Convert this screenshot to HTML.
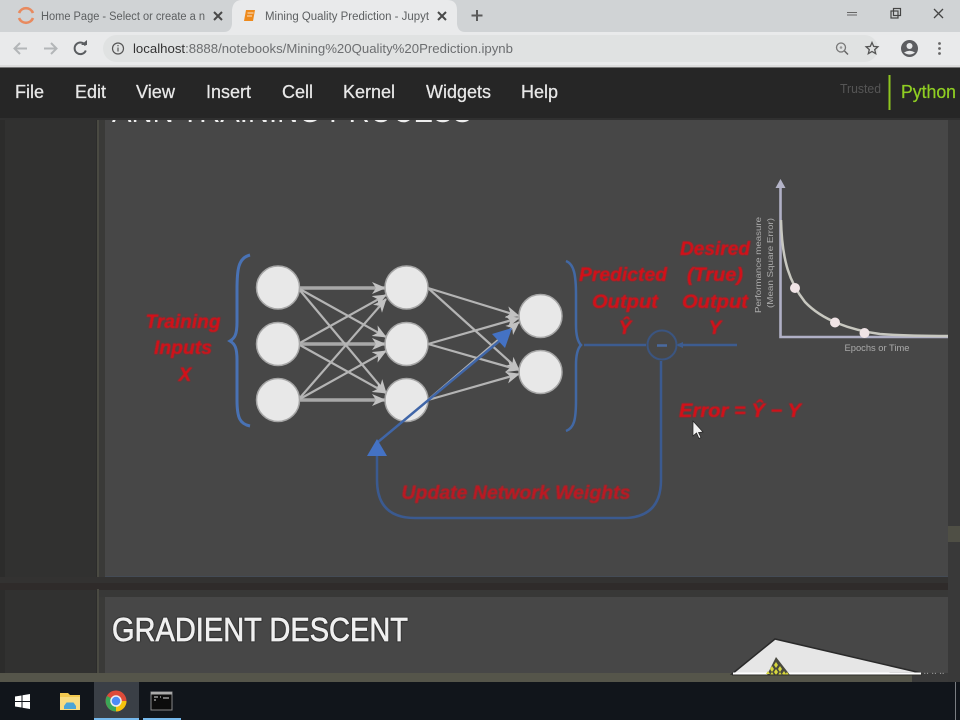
<!DOCTYPE html>
<html><head><meta charset="utf-8"><style>
html,body{margin:0;padding:0;background:#2e2e2d}
body{width:960px;height:720px;overflow:hidden;position:relative;font-family:"Liberation Sans",sans-serif}
svg{position:absolute;left:0;top:0}
</style></head><body>
<svg width="960" height="720" viewBox="0 0 960 720" xmlns="http://www.w3.org/2000/svg" font-family="Liberation Sans, sans-serif">
<defs>
<filter id="b"><feGaussianBlur stdDeviation="0.35"/></filter>
<filter id="c"><feGaussianBlur stdDeviation="0.55"/></filter>
<marker id="ah" viewBox="0 0 14 12" refX="13" refY="6" markerUnits="userSpaceOnUse" markerWidth="14" markerHeight="12" orient="auto"><path d="M0 0L14 6L0 12L4 6Z" fill="#c2c2c2"/></marker>
</defs>
<!-- page -->
<rect width="960" height="720" fill="#2e2e2d"/>
<!-- notebook -->
<rect x="0" y="118" width="948" height="460" fill="#2c2c2b"/>
<rect x="5" y="120" width="91" height="457" fill="#313130"/>
<rect x="97" y="120" width="2" height="457" fill="#4a4a42"/>
<rect x="99" y="120" width="6" height="457" fill="#3a3a38"/>
<rect x="105" y="120" width="843" height="457" fill="#474747"/>
<rect x="105" y="576" width="843" height="1" fill="#444b55"/>
<rect x="0" y="577" width="948" height="6" fill="#333231"/>
<rect x="0" y="583" width="948" height="7" fill="#2f2b2a"/>
<rect x="0" y="590" width="948" height="85" fill="#2c2c2b"/>
<rect x="5" y="590" width="91" height="85" fill="#313130"/>
<rect x="97" y="589" width="2" height="86" fill="#4a4a42"/>
<rect x="99" y="590" width="849" height="7" fill="#383837"/>
<rect x="99" y="597" width="6" height="78" fill="#3a3a38"/>
<rect x="105" y="597" width="843" height="78" fill="#474747"/>
<rect x="948" y="118" width="12" height="564" fill="#393939"/>
<rect x="948" y="526" width="12" height="16" fill="#4f4f45"/>
<rect x="0" y="673" width="912" height="9" fill="#55554a"/>
<rect x="912" y="673" width="36" height="9" fill="#3a3a3a"/>
<!-- clipped title (covered by the menubar above y=120) -->
<text x="112" y="122" font-size="33" fill="#eee" textLength="360" lengthAdjust="spacingAndGlyphs">ANN TRAINING PROCESS</text>
<!-- chrome tabs -->
<rect width="960" height="32" fill="#d0d3d5"/>
<path d="M224 32q7 0 8-8v-14q1-10 10-10h205q10 0 10 10v14q1 8 8 8z" fill="#e9eaeb"/>
<rect y="32" width="960" height="33" fill="#e9eaeb"/>
<rect y="65" width="960" height="2" fill="#dcdcdc"/>
<rect y="67" width="960" height="1" fill="#777"/>
<rect x="103" y="35" width="775" height="27" rx="13.500" fill="#e0e2e2"/>
<g filter="url(#b)">
<path d="M19 13a7.500 7.500 0 0 1 14 0M19 18a7.500 7.500 0 0 0 14 0" fill="none" stroke="#e88a5e" stroke-width="2.600"/>
<text x="41" y="20" font-size="11.500" fill="#5c5f61" textLength="164" lengthAdjust="spacingAndGlyphs">Home Page - Select or create a n</text>
<path d="M214 12l8 8M222 12l-8 8" stroke="#4a4a4a" stroke-width="2"/>
<path d="M246 10h9l-2 11h-9z" fill="#ee8a1c"/><path d="M247.500 13h6M247 16h5" stroke="#fff" stroke-width=".8"/>
<text x="265" y="20" font-size="11.500" fill="#5c5f61" textLength="164" lengthAdjust="spacingAndGlyphs">Mining Quality Prediction - Jupyt</text>
<path d="M438 12l8 8M446 12l-8 8" stroke="#4a4a4a" stroke-width="2"/>
<path d="M477 10v11M471.500 15.500h11" stroke="#5a5a5a" stroke-width="2"/>
<path d="M847 12.500h10M847 15h10" stroke="#666" stroke-width="1"/>
<rect x="891" y="11" width="7" height="7" fill="none" stroke="#444" stroke-width="1.200"/><rect x="893.500" y="8.500" width="7" height="7" fill="none" stroke="#444" stroke-width="1.200"/>
<path d="M934 9l9 9M943 9l-9 9" stroke="#444" stroke-width="1.300"/>
<path d="M27 48.500H15M20 43l-5.500 5.500L20 54" fill="none" stroke="#b3b6b8" stroke-width="2"/>
<path d="M44 48.500h12M51 43l5.500 5.500L51 54" fill="none" stroke="#b3b6b8" stroke-width="2"/>
<path d="M85.500 45.500a5.800 5.800 0 1 0 .3 5" fill="none" stroke="#5a5d60" stroke-width="2"/><path d="M81 45h6v-5z" fill="#5a5d60"/>
<circle cx="118" cy="48.500" r="5.500" fill="none" stroke="#555" stroke-width="1.200"/><path d="M118 47.500v4M118 45v1.300" stroke="#555" stroke-width="1.200"/>
<text x="133" y="53" font-size="13" textLength="380" lengthAdjust="spacingAndGlyphs" fill="#6c6e70"><tspan fill="#333">localhost</tspan>:8888/notebooks/Mining%20Quality%20Prediction.ipynb</text>
<circle cx="841" cy="47.500" r="4.500" fill="none" stroke="#777" stroke-width="1.300"/><circle cx="841" cy="47.500" r="1.300" fill="#999"/><path d="M844.500 51l3.500 3.500" stroke="#666" stroke-width="1.500"/>
<path d="M872 42.500l1.700 3.900 4.200.4-3.200 2.800 1 4.100-3.700-2.200-3.700 2.200 1-4.100-3.200-2.800 4.200-.4z" fill="none" stroke="#555" stroke-width="1.300"/>
<circle cx="909.500" cy="48.500" r="8.500" fill="#5b5d60"/><circle cx="909.500" cy="46" r="3" fill="#e9eaeb"/><path d="M904 52.500q5.500-3.500 11 0q-5.500 4-11 0z" fill="#e9eaeb"/>
<circle cx="939.500" cy="43.500" r="1.400" fill="#666"/><circle cx="939.500" cy="48.500" r="1.400" fill="#666"/><circle cx="939.500" cy="53.500" r="1.400" fill="#666"/>
</g>
<!-- menubar -->
<rect y="68" width="960" height="50" fill="#262626"/>
<rect y="118" width="960" height="2" fill="#303030"/>
<g fill="#e8e8e8" stroke="#e8e8e8" stroke-width=".25" font-size="18" filter="url(#b)">
<text x="15" y="98" textLength="29" lengthAdjust="spacingAndGlyphs">File</text>
<text x="75" y="98" textLength="31" lengthAdjust="spacingAndGlyphs">Edit</text>
<text x="136" y="98" textLength="39" lengthAdjust="spacingAndGlyphs">View</text>
<text x="206" y="98" textLength="45" lengthAdjust="spacingAndGlyphs">Insert</text>
<text x="282" y="98" textLength="31" lengthAdjust="spacingAndGlyphs">Cell</text>
<text x="343" y="98" textLength="52" lengthAdjust="spacingAndGlyphs">Kernel</text>
<text x="426" y="98" textLength="65" lengthAdjust="spacingAndGlyphs">Widgets</text>
<text x="521" y="98" textLength="37" lengthAdjust="spacingAndGlyphs">Help</text>
</g>
<text x="840" y="93" font-size="12.500" fill="#555" textLength="41" lengthAdjust="spacingAndGlyphs" filter="url(#b)">Trusted</text>
<rect x="888.500" y="75" width="2" height="35" fill="#8fc520"/>
<text x="901" y="98" font-size="18" fill="#8fce24" stroke="#8fce24" stroke-width=".25" textLength="55" lengthAdjust="spacingAndGlyphs" filter="url(#b)">Python</text>
<!-- network arrows -->
<g fill="none" filter="url(#b)">
<g stroke="#a8a8a8" stroke-width="3.500" marker-end="url(#ah)">
<path d="M298 288H385"/><path d="M298 344H385"/><path d="M298 400H385"/>
</g>
<g stroke="#b4b4b4" stroke-width="2.200" marker-end="url(#ah)">
<path d="M298 288L386 337"/><path d="M298 288L386 393"/>
<path d="M298 344L386 295"/><path d="M298 344L386 393"/>
<path d="M298 400L386 299"/><path d="M298 400L386 351"/>
<path d="M428 288L519 316"/><path d="M428 288L519 370"/>
<path d="M428 344L519 318"/><path d="M428 344L519 370"/>
<path d="M428 400L519 322"/><path d="M428 400L519 374"/>
</g>
</g>
<g fill="#e8e8e8" stroke="#a6a6a6" stroke-width="1.500" filter="url(#b)">
<circle cx="278" cy="287.500" r="21.500"/><circle cx="278" cy="344" r="21.500"/><circle cx="278" cy="400" r="21.500"/>
<circle cx="406.500" cy="287.500" r="21.500"/><circle cx="406.500" cy="344" r="21.500"/><circle cx="406.500" cy="400" r="21.500"/>
<circle cx="540.500" cy="316" r="21.500"/><circle cx="540.500" cy="372" r="21.500"/>
</g>
<!-- blue -->
<g fill="none" filter="url(#b)">
<path d="M250 255C238 258 237 270 237 290V322C237 334 235 338 230 341C235 344 237 348 237 360V400C237 418 240 424 250 426" stroke="#4a72b4" stroke-width="3"/>
<path d="M566 261C574 264 576 275 576 295V325C576 336 578 342 581 345C578 348 576 354 576 365V400C576 420 574 428 566 431" stroke="#4268a4" stroke-width="2.500"/>
<path d="M584 345H646M678 345H737" stroke="#3c5c90" stroke-width="2.500"/>
<circle cx="662" cy="345" r="14.500" stroke="#3a5480" stroke-width="2"/>
<path d="M657 345.500h10" stroke="#4a6aa0" stroke-width="2.500"/>
<path d="M661 361V480Q661 518 623 518H415Q377 518 377 480V455" stroke="#3a5a90" stroke-width="2.500"/>
<path d="M378 442L503 338" stroke="#3f66a8" stroke-width="2.500"/>
</g>
<path d="M367 456L377 439L387 456Z" fill="#4472c4"/>
<path d="M492 334L512 328L505 348Z" fill="#4472c4"/>
<path d="M676 345l7-3v6z" fill="#3c5c90"/>
<!-- red labels -->
<g fill="#d81018" stroke="#d81018" stroke-width=".3" font-weight="bold" font-style="italic" font-size="19" text-anchor="middle" filter="url(#c)">
<text x="183" y="328" textLength="75" lengthAdjust="spacingAndGlyphs">Training</text>
<text x="183" y="354" textLength="58" lengthAdjust="spacingAndGlyphs">Inputs</text>
<text x="185" y="381">X</text>
<text x="623" y="281" textLength="88" lengthAdjust="spacingAndGlyphs">Predicted</text>
<text x="625" y="308" textLength="66" lengthAdjust="spacingAndGlyphs">Output</text>
<text x="625" y="334">Ŷ</text>
<text x="715" y="255" textLength="70" lengthAdjust="spacingAndGlyphs">Desired</text>
<text x="715" y="281" textLength="56" lengthAdjust="spacingAndGlyphs">(True)</text>
<text x="715" y="308" textLength="66" lengthAdjust="spacingAndGlyphs">Output</text>
<text x="715" y="334">Y</text>
<text x="740" y="417" textLength="122" lengthAdjust="spacingAndGlyphs">Error = Ŷ − Y</text>
<text x="516" y="499" fill="#c01820" stroke="#c01820" textLength="229" lengthAdjust="spacingAndGlyphs">Update Network Weights</text>
</g>
<!-- cursor -->
<path d="M693 421V436L696.500 433L699 438.500L701 437.500L698.500 432.500L703 432Z" fill="#f2f2f2" stroke="#222" stroke-width=".7"/>
<!-- chart -->
<g filter="url(#b)">
<path d="M780.500 186V337H948" fill="none" stroke="#b0b0c6" stroke-width="2.600"/>
<path d="M775.500 188L780.500 179L785.500 188Z" fill="#b4b4c8"/>
<path d="M781 220C782 262 790 283 805 302C822 320 850 330 880 334C905 336 930 336 948 336" fill="none" stroke="#c8c8c0" stroke-width="2.500"/>
<circle cx="795" cy="288" r="5" fill="#f0e4e6"/><circle cx="835" cy="322.500" r="5" fill="#f0e4e6"/><circle cx="864.500" cy="333" r="5" fill="#f0e4e6"/>
<text x="877" y="351" font-size="9" fill="#aaa" text-anchor="middle" textLength="65" lengthAdjust="spacingAndGlyphs">Epochs or Time</text>
<text transform="translate(761 265) rotate(-90)" font-size="8.500" fill="#aaa" text-anchor="middle" textLength="96" lengthAdjust="spacingAndGlyphs">Performance measure</text>
<text transform="translate(773 263) rotate(-90)" font-size="8.500" fill="#aaa" text-anchor="middle" textLength="90" lengthAdjust="spacingAndGlyphs">(Mean Square Error)</text>
</g>
<!-- section 2 -->
<text x="112" y="641" font-size="33" fill="#222" stroke="#222" stroke-width="1.800" textLength="296" lengthAdjust="spacingAndGlyphs" filter="url(#c)">GRADIENT DESCENT</text>
<text x="112" y="641" font-size="33" fill="#f0f0f0" stroke="#f0f0f0" stroke-width=".7" textLength="296" lengthAdjust="spacingAndGlyphs" filter="url(#b)">GRADIENT DESCENT</text>
<path d="M732 674L775 639L921 673Z" fill="#e6e6e6" stroke="#2a2a2a" stroke-width="1.500" filter="url(#b)"/>
<path d="M733 673.500H921" stroke="#fff" stroke-width="2"/>
<path d="M767 675L776 657L790 675Z" fill="#4a4a40"/>
<g fill="#d8d83c">
<path d="M776 662l2 3-2 3-2-3zM772 666l2 3-2 3-2-3zM780 666l2 3-2 3-2-3zM776 669l2 3-2 3-2-3zM768 671l2 3h-4zM784 671l2 3-2 1-2-1zM772 672l2 3h-4zM780 672l2 3h-4zM787 672l2 3h-4z"/>
</g>
<rect x="732" y="674.500" width="190" height="1" fill="#2e2e2a"/>
<text x="924" y="675" font-size="4.500" fill="#999" textLength="20" lengthAdjust="spacing">•• •• ••</text>
<!-- taskbar -->
<rect y="682" width="960" height="38" fill="#11151b"/>
<rect x="94" y="682" width="45" height="38" fill="#3a3f46"/>
<rect x="94" y="718" width="45" height="2" fill="#76b9ed"/>
<rect x="143" y="718" width="38" height="2" fill="#76b9ed"/>
<rect x="955" y="682" width="1" height="38" fill="#7a7d82"/>
<path d="M15 696.500l6.500-1v5.500H15zM22.500 695.300l7.500-1.300v7h-7.500zM15 702h6.500v5.500l-6.500-1zM22.500 702H30v7l-7.500-1.300z" fill="#fff"/>
<path d="M60 693h8l2 2h10v15H60z" fill="#f3c94f"/>
<rect x="60" y="697" width="20" height="13" fill="#f8dc80"/>
<path d="M64 706l2.500-3.500h7l2.500 3.500v3H64z" fill="#4aa5d8"/>
<circle cx="116" cy="701" r="10.500" fill="#dd4b39"/>
<path d="M116 701L107 706.200A10.500 10.500 0 0 0 116 711.500Z" fill="#3aa757"/>
<path d="M107 706.200A10.500 10.500 0 0 1 107 696L116 701Z" fill="#3aa757"/>
<path d="M116 701L126.500 701A10.500 10.500 0 0 1 116 711.500Z" fill="#f4c20d"/>
<circle cx="116" cy="701" r="5" fill="#4c8bf5" stroke="#eee" stroke-width="1.500"/>
<rect x="151" y="692" width="21" height="18" fill="#0c0c0c" stroke="#888" stroke-width="1"/>
<rect x="151" y="692" width="21" height="2.500" fill="#aaa"/>
<path d="M154 697h4M160 697h1M154 700h2M163 698h6" stroke="#ddd" stroke-width="1"/>
</svg>
</body></html>
